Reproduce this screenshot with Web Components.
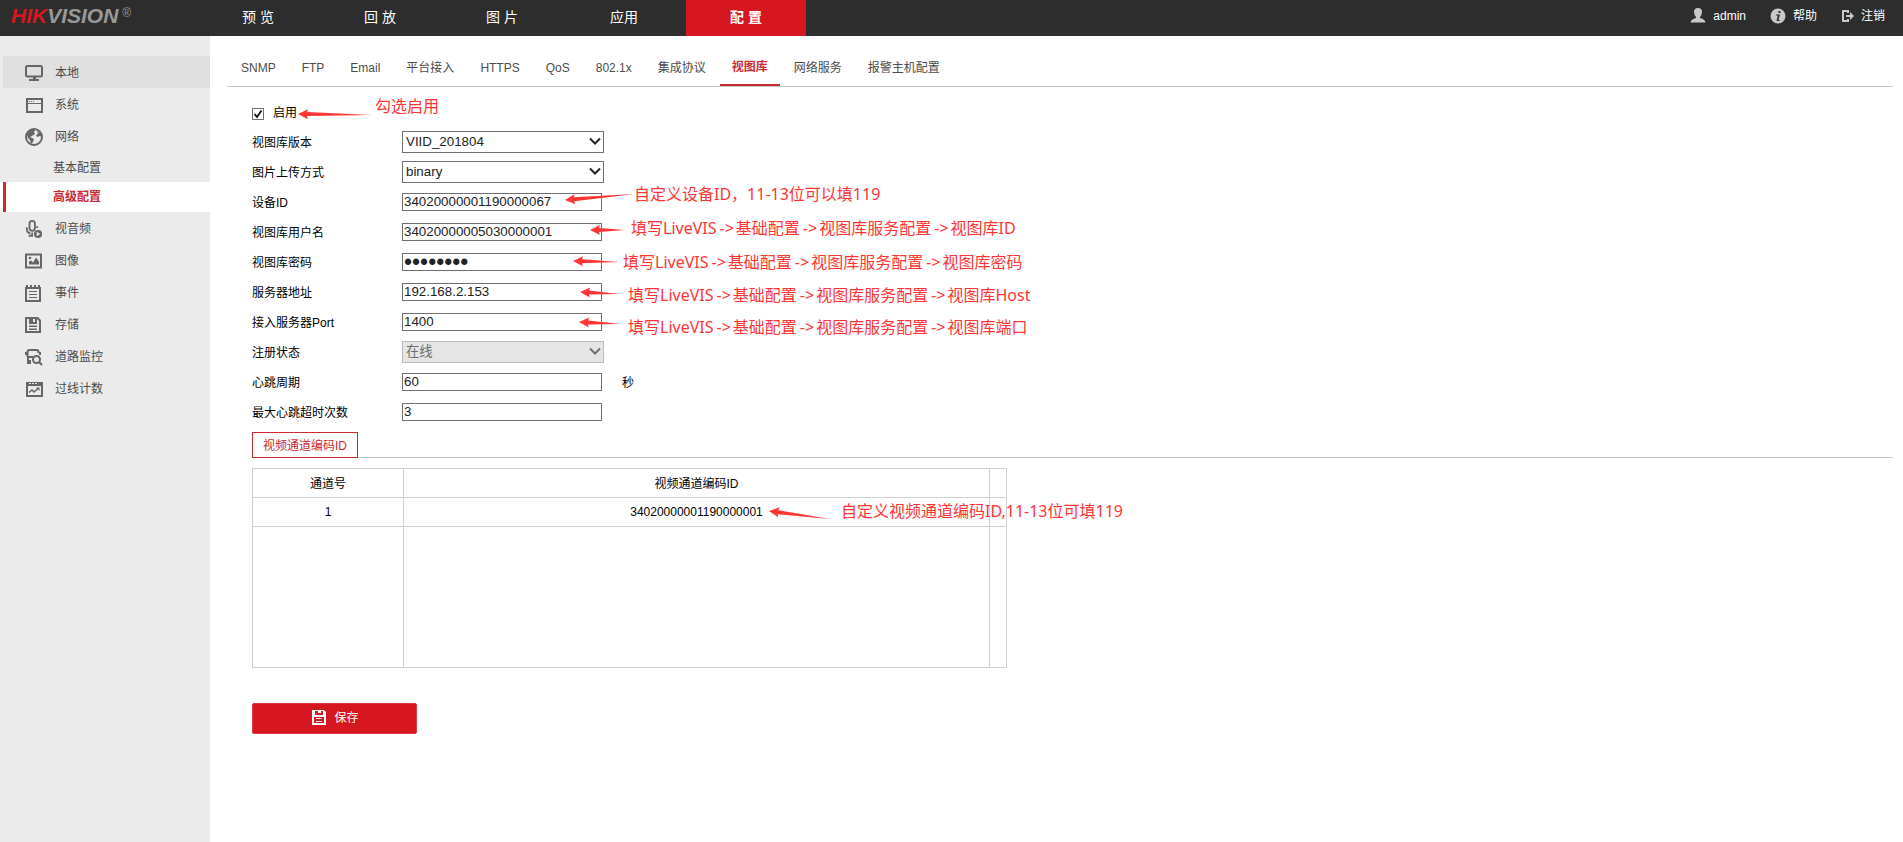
<!DOCTYPE html>
<html lang="zh-CN">
<head>
<meta charset="utf-8">
<title>配置 - 视图库</title>
<style>
  html, body { margin: 0; }
  body {
    font-family: "Liberation Sans", Arial, "Noto Sans CJK SC", sans-serif;
    font-size: 12px;
    line-height: 18px;
    color: #000;
    background: #fff;
  }
</style>
</head>
<body>
<config-app></config-app>

<script>
const define = (name, html, setup) => {
  const template = document.createElement('template');
  template.innerHTML = html;
  customElements.define(name, class extends HTMLElement {
    connectedCallback() {
      if (this.shadowRoot) return;
      const root = this.attachShadow({ mode: 'open' });
      root.append(template.content.cloneNode(true));
      if (setup) setup(this, root);
    }
  });
};

/* ---------- icons ---------- */
const ICONS = {
  monitor: ['0 0 18 18', `<rect x="1" y="2" width="16" height="10.500" rx="1.500" fill="none" stroke="currentColor" stroke-width="2"/><path fill="currentColor" d="M8 13h3v2h3v2H4v-2h4z"/>`],
  window: ['0 0 18 18', `<path fill="currentColor" fill-rule="evenodd" d="M1 2h17v15H1zM3 4v3h13V4zM3 8v7h13V8z"/><path fill="currentColor" d="M4 5h1v1H4zM6 5h1v1H6zM8 5h1v1H8z"/>`],
  globe: ['0 0 18 18', `<circle cx="9" cy="9" r="8" fill="none" stroke="currentColor" stroke-width="2"/><path fill="currentColor" d="M3 4l4-3 3 1-1 2 1 2-3 2-2 1 4 2-1 3-2 2-1-4-2-2-1-3zM12 3l4 3 1 3-2-1-3 1-1-2 2-1z"/>`],
  mic: ['0 0 18 20', `<rect x="4" y="1" width="6" height="11" rx="3" fill="none" stroke="currentColor" stroke-width="2"/><path d="M1 8v2q0 4 4 5M3 17.500h5M7 14v4M12.500 7v2" fill="none" stroke="currentColor" stroke-width="2"/><circle cx="13.500" cy="15.500" r="4.500" fill="currentColor"/><path d="M12 13l4 2.500-4 2.500z" fill="#ebebeb"/>`],
  image: ['0 0 18 18', `<path fill="currentColor" fill-rule="evenodd" d="M0 1.500h17v15H0zM2 3.500v11h13v-11z"/><path fill="currentColor" d="M4 12.500v-3l2-1 2 2 3-5 3 4v3z"/><circle cx="5" cy="6" r="1.300" fill="currentColor"/>`],
  notes: ['0 0 18 18', `<path fill="currentColor" fill-rule="evenodd" d="M0 3h16v15H0zM2 5v11h12V5z"/><path fill="currentColor" d="M1 1h2v3H1zM5 1h2v3H5zM9 1h2v3H9zM13 1h2v3h-2zM4 7h8v1H4zM4 10h8v1H4zM4 13h8v1H4z"/>`],
  floppy: ['0 0 18 18', `<path fill="currentColor" fill-rule="evenodd" d="M0 1h13l3 3v13H0zM2 3v12h12V5l-2-2v5H4V3z"/><path fill="currentColor" d="M4 2h8v5H4zM4 9.500h8V11H4zM4 12.500h8V14H4z"/><path fill="#ebebeb" d="M8 3h2v3H8z"/>`],
  vehicle: ['0 0 18 18', `<path fill="none" stroke="currentColor" stroke-width="2" d="M2.500 9V4q0-2 2-2h7q2 0 2 2v1M2 9h6M3 10v5h3"/><path fill="currentColor" d="M3 12h3v4H3zM0 4h2v3H0zM14 4h2v3h-2z"/><circle cx="11.500" cy="11.500" r="3.500" fill="none" stroke="currentColor" stroke-width="2"/><path d="M14 14l3 3" stroke="currentColor" stroke-width="2"/>`],
  chart: ['0 0 18 18', `<path fill="currentColor" fill-rule="evenodd" d="M1 2h17v15H1zM3 6v9h13V6z"/><path fill="#ebebeb" d="M4 3h2v1H4zM7 3h2v1H7zM10 3h2v1h-2z"/><path fill="none" stroke="currentColor" stroke-width="1.500" d="M4 12.500l3-2.500 2 2 4-3.500"/><path fill="currentColor" d="M11 7.500h3.500V11z"/>`],
  user: ['0 0 16 16', `<path fill="currentColor" d="M8 0q4 0 4 4 0 3-2 5v1q5 1 5.500 4.500H.500Q1 11 6 10V9Q4 7 4 4q0-4 4-4z"/>`],
  info: ['0 0 16 16', `<circle cx="8" cy="8" r="7.500" fill="currentColor"/><path fill="#2d2d2d" d="M8.500 3h2v2h-2zM6 6.500h4L8.500 12H10l-.500 1H6.500l1.300-5.500H6z"/>`],
  logout: ['0 0 13 16', `<path fill="currentColor" d="M1 2h7v3H6V4H3v8h3v-1h2v3H1zM5 7h4V4l4 4-4 4V9H5z"/>`],
  save: ['0 0 14 15', `<path fill="currentColor" d="M0 0h12l2 2v13H0z"/><path fill="#d7171f" d="M3 1h3v2h3V1h2v4H3zM2 7h10v6H2z"/><path fill="currentColor" d="M4 8h6v1H4zM4 11h6v1H4z"/>`]
};

define('ui-icon', `
  <style>
    :host { display: block; flex: none; width: 18px; height: 18px; }
    svg { display: block; width: 100%; height: 100%; }
  </style>`,
  (host, root) => {
    const [box, shapes] = ICONS[host.getAttribute('name')];
    const holder = document.createElement('template');
    holder.innerHTML = `<svg viewBox="${box}" aria-hidden="true">${shapes}</svg>`;
    root.append(holder.content);
  });

const prependIcon = (host, root) => {
  if (!host.hasAttribute('icon')) return;
  const icon = document.createElement('ui-icon');
  icon.setAttribute('name', host.getAttribute('icon'));
  root.querySelector('a').prepend(icon);
};

/* ---------- header ---------- */
define('brand-logo', `
  <style>
    :host { display: flex; align-items: flex-start; width: 198px; padding: 2px 0 0 11px; box-sizing: border-box; height: 36px; color: #999; }
    b { font-size: 21px; line-height: 28px; font-style: italic; }
    i { color: #d7171f; }
    span { font-size: 12px; line-height: 22px; margin-left: 4px; }
  </style>
  <b><i>HIK</i>VISION</b><span>®</span>`);

define('nav-item', `
  <style>
    :host { display: block; width: 120px; }
    a { display: block; font-size: 14px; line-height: 34px; height: 36px; text-align: center; color: #fff; text-decoration: none; }
    :host([active]) { background: #d7171f; }
    :host([active]) a { font-weight: bold; }
  </style>
  <a href="#"><slot></slot></a>`);

define('user-link', `
  <style>
    :host { display: block; }
    a { display: flex; align-items: center; gap: 7px; color: #fff; text-decoration: none; line-height: 18px; }
    ui-icon { width: 16px; height: 16px; color: #c8c8c8; }
    :host([icon="logout"]) ui-icon { width: 13px; }
  </style>
  <a href="#"><slot></slot></a>`, prependIcon);

define('app-header', `
  <style>
    :host { display: flex; height: 36px; background: #2d2d2d; }
    nav { display: flex; gap: 2px; }
    .user { display: flex; gap: 24px; margin-left: auto; padding: 7px 18px 0 0; height: 18px; }
  </style>
  <brand-logo></brand-logo>
  <nav>
    <nav-item>预 览</nav-item>
    <nav-item>回 放</nav-item>
    <nav-item>图 片</nav-item>
    <nav-item>应用</nav-item>
    <nav-item active>配 置</nav-item>
  </nav>
  <div class="user">
    <user-link icon="user">admin</user-link>
    <user-link icon="info">帮助</user-link>
    <user-link icon="logout">注销</user-link>
  </div>`);

/* ---------- sidebar ---------- */
define('side-item', `
  <style>
    :host { display: block; margin-left: 3px; }
    a { display: flex; align-items: center; gap: 12px; height: 32px; padding: 1px 0 0 22px; box-sizing: border-box; color: #4c4c4c; text-decoration: none; }
    ui-icon { color: #666; }
    :host([hover]) { background: #e0e0e0; }
    :host([sub]) a { height: 30px; padding-left: 50px; }
    :host([active]) { background: #fff; margin-left: 0; }
    :host([active]) a { margin-left: 3px; padding: 0 0 0 47px; border-left: 3px solid #cb2a31; color: #cb2a31; font-weight: bold; }
  </style>
  <a href="#"><slot></slot></a>`, prependIcon);

define('side-menu', `
  <style>
    :host { display: block; flex: none; width: 210px; padding-top: 20px; box-sizing: border-box; background: #ebebeb; }
  </style>
  <nav>
    <side-item icon="monitor" hover>本地</side-item>
    <side-item icon="window">系统</side-item>
    <side-item icon="globe">网络</side-item>
    <side-item sub>基本配置</side-item>
    <side-item sub active>高级配置</side-item>
    <side-item icon="mic">视音频</side-item>
    <side-item icon="image">图像</side-item>
    <side-item icon="notes">事件</side-item>
    <side-item icon="floppy">存储</side-item>
    <side-item icon="vehicle">道路监控</side-item>
    <side-item icon="chart">过线计数</side-item>
  </nav>`);

/* ---------- tabs ---------- */
define('tab-item', `
  <style>
    :host { display: block; }
    a { display: block; box-sizing: border-box; height: 35px; padding: 8px 12px 0; color: #4c4c4c; text-decoration: none; white-space: nowrap; }
    :host([active]) a { padding-top: 7px; border-bottom: 2px solid #cb2a31; color: #cb2a31; font-weight: bold; }
  </style>
  <a href="#"><slot></slot></a>`);

define('tab-bar', `
  <style>
    :host { display: flex; gap: 2px; margin: 0 10px 0 17px; padding: 15px 0 0 2px; border-bottom: 1px solid #c6c6c6; }
  </style>
  <slot></slot>`);

/* ---------- annotation: tapered arrow with a note ---------- */
define('call-out', `
  <style>
    :host { position: absolute; left: 0; top: 0; width: 0; height: 0; color: #ff3535; z-index: 1; pointer-events: none; }
    svg { position: absolute; left: 0; top: 0; overflow: visible; fill: currentColor; }
    span { position: absolute; font: 16px/20px "Noto Sans", "Noto Sans CJK SC", sans-serif; white-space: nowrap; }
  </style>
  <svg width="1" height="1" aria-hidden="true"><polygon/></svg>
  <span><slot></slot></span>`,
  (host, root) => {
    const point = name => host.getAttribute(name).split(',').map(Number);
    const [tx, ty] = point('tip'), [ex, ey] = point('tail'), [nx, ny] = point('note');
    const len = Math.hypot(ex - tx, ey - ty), ux = (ex - tx) / len, uy = (ey - ty) / len;
    const at = (d, n) => `${tx + ux * d - uy * n},${ty + uy * d + ux * n}`;
    root.querySelector('polygon').setAttribute('points',
      [at(0, 0), at(10, -5), at(9, -2), at(len, 0), at(9, 2), at(10, 5)].join(' '));
    const span = root.querySelector('span');
    span.style.left = nx + 'px';
    span.style.top = ny - 10 + 'px';
  });

/* ---------- form ---------- */
define('field-row', `
  <style>
    :host { display: flex; align-items: center; position: relative; height: 30px; }
    label { width: 150px; padding-top: 2px; }
    input, select { box-sizing: border-box; margin: 0; border: 1px solid #707070; border-radius: 0; background: #fff; color: #222; font-family: inherit; outline: none; }
    input { width: 200px; height: 18px; padding: 0 1px 2px; }
    input[type="password"] { font-size: 23px; padding-bottom: 0; }
    select { appearance: none; display: block; width: 202px; height: 22px; padding: 0 20px 2px 3px; opacity: 1; }
    select:disabled { background: #e5e5e5; border-color: #bbb; color: #6d6d6d; }
    .pick { display: grid; align-items: center; justify-items: end; }
    .pick > * { grid-area: 1 / 1; }
    .pick svg { width: 12px; height: 8px; margin: 0 3px 2px 0; color: #222; pointer-events: none; }
    select:disabled + svg { color: #6d6d6d; }
    .unit { margin-left: 20px; padding-top: 2px; }
  </style>
  <label for="f"></label>`,
  (host, root) => {
    root.querySelector('label').textContent = host.getAttribute('label');
    const value = host.getAttribute('value');
    if (host.getAttribute('type') === 'select') {
      const pick = document.createElement('div');
      pick.className = 'pick';
      pick.innerHTML = `<select id="f"><option>${value}</option></select>
        <svg viewBox="0 0 12 8" aria-hidden="true"><path d="M1 1.500l5 5 5-5" fill="none" stroke="currentColor" stroke-width="2"/></svg>`;
      pick.querySelector('select').disabled = host.hasAttribute('disabled');
      root.append(pick);
    } else {
      const input = document.createElement('input');
      input.id = 'f';
      input.type = host.getAttribute('type') || 'text';
      input.value = value;
      root.append(input);
    }
    if (host.hasAttribute('unit')) {
      const unit = document.createElement('span');
      unit.className = 'unit';
      unit.textContent = host.getAttribute('unit');
      root.append(unit);
    }
    root.append(document.createElement('slot'));
  });

define('check-row', `
  <style>
    :host { display: flex; align-items: center; position: relative; height: 30px; }
    input { appearance: none; box-sizing: border-box; width: 12px; height: 12px; margin: 4px 0 0; border: 1px solid #707070; background: #fff; }
    input:checked { background: #fff url("data:image/svg+xml,%3Csvg xmlns='http://www.w3.org/2000/svg' viewBox='0 0 10 10'%3E%3Cpath d='M1.500 5l2.500 3 4.500-6.500' fill='none' stroke='%23111' stroke-width='1.800'/%3E%3C/svg%3E"); }
    label { margin-left: 9px; padding-top: 2px; }
  </style>
  <input type="checkbox" id="c" checked><label for="c"></label><slot></slot>`,
  (host, root) => { root.querySelector('label').textContent = host.getAttribute('label'); });

define('section-tab', `
  <style>
    :host { display: flex; margin: 5px 10px 10px 0; border-bottom: 1px solid #c6c6c6; height: 25px; }
    button { box-sizing: border-box; height: 26px; padding: 2px 10px 0; border: 1px solid #cb2a31; background: #fff; color: #cb2a31; font: inherit; line-height: 20px; }
  </style>
  <button type="button"><slot></slot></button>`);

define('channel-table', `
  <style>
    :host { display: block; position: relative; }
    table { width: 755px; table-layout: fixed; border-collapse: collapse; }
    th, td { height: 28px; padding: 0; border: 1px solid #d0d0d0; font-weight: normal; text-align: center; }
    th { height: 26px; padding-top: 2px; }
    .no { width: 150px; }
    .end { width: 16px; }
    .rest td { height: 140px; }
  </style>
  <table>
    <thead><tr><th class="no">通道号</th><th>视频通道编码ID</th><th class="end"></th></tr></thead>
    <tbody>
      <tr><td>1</td><td>34020000001190000001</td><td></td></tr>
      <tr class="rest"><td></td><td></td><td></td></tr>
    </tbody>
  </table>
  <slot></slot>`);

define('save-button', `
  <style>
    :host { display: block; margin-top: 35px; }
    button { display: flex; align-items: center; justify-content: center; gap: 8px; width: 165px; height: 31px; padding: 0 0 2px 2px; border: 1px solid #dd3a41; border-radius: 2px; background: #d7171f; color: #fff; font: inherit; }
    ui-icon { width: 14px; height: 15px; }
  </style>
  <button type="button"><ui-icon name="save"></ui-icon><slot></slot></button>`);

define('config-form', `
  <style>
    :host { display: block; padding: 10px 0 0 42px; }
    form { margin: 0; }
    .to { margin: 0 2px 0 3px; }
  </style>
  <form>
    <check-row label="启用"><call-out tip="46,17" tail="120,18" note="123,9">勾选启用</call-out></check-row>
    <field-row type="select" label="视图库版本" value="VIID_201804"></field-row>
    <field-row type="select" label="图片上传方式" value="binary"></field-row>
    <field-row label="设备ID" value="34020000001190000067"><call-out tip="313,13" tail="383,7" note="382,7">自定义设备ID，11-13位可以填119</call-out></field-row>
    <field-row label="视图库用户名" value="34020000005030000001"><call-out tip="338,13" tail="373,13" note="379,11">填写LiveVIS<span class="to">-&gt;</span>基础配置<span class="to">-&gt;</span>视图库服务配置<span class="to">-&gt;</span>视图库ID</call-out></field-row>
    <field-row type="password" label="视图库密码" value="password"><call-out tip="321,14" tail="367,15" note="371,15">填写LiveVIS<span class="to">-&gt;</span>基础配置<span class="to">-&gt;</span>视图库服务配置<span class="to">-&gt;</span>视图库密码</call-out></field-row>
    <field-row label="服务器地址" value="192.168.2.153"><call-out tip="328,15" tail="367,17" note="376,18">填写LiveVIS<span class="to">-&gt;</span>基础配置<span class="to">-&gt;</span>视图库服务配置<span class="to">-&gt;</span>视图库Host</call-out></field-row>
    <field-row label="接入服务器Port" value="1400"><call-out tip="327,15" tail="368,17" note="376,20">填写LiveVIS<span class="to">-&gt;</span>基础配置<span class="to">-&gt;</span>视图库服务配置<span class="to">-&gt;</span>视图库端口</call-out></field-row>
    <field-row type="select" label="注册状态" value="在线" disabled></field-row>
    <field-row label="心跳周期" value="60" unit="秒"></field-row>
    <field-row label="最大心跳超时次数" value="3"></field-row>
    <section-tab>视频通道编码ID</section-tab>
    <channel-table><call-out tip="517,43" tail="578,51" note="589,43">自定义视频通道编码ID,11-13位可填119</call-out></channel-table>
    <save-button>保存</save-button>
  </form>`);

define('config-app', `
  <style>
    :host { display: flex; flex-direction: column; min-height: 100vh; }
    .body { display: flex; flex: 1; }
    main { flex: 1; min-width: 0; }
  </style>
  <app-header></app-header>
  <div class="body">
    <side-menu></side-menu>
    <main>
      <tab-bar>
        <tab-item>SNMP</tab-item>
        <tab-item>FTP</tab-item>
        <tab-item>Email</tab-item>
        <tab-item>平台接入</tab-item>
        <tab-item>HTTPS</tab-item>
        <tab-item>QoS</tab-item>
        <tab-item>802.1x</tab-item>
        <tab-item>集成协议</tab-item>
        <tab-item active>视图库</tab-item>
        <tab-item>网络服务</tab-item>
        <tab-item>报警主机配置</tab-item>
      </tab-bar>
      <config-form></config-form>
    </main>
  </div>`);
</script>
</body>
</html>
